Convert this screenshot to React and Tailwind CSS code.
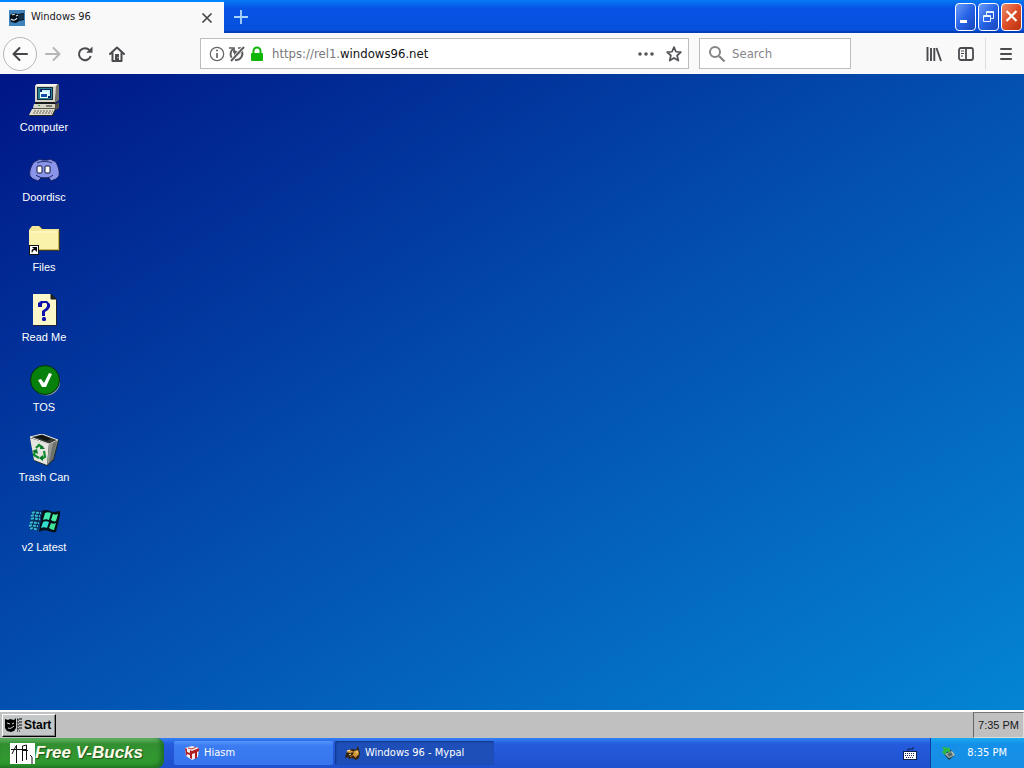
import React from "react";

function TabIcon() {
  return (
    <svg className="size-4 shrink-0" viewBox="0 0 16 16" aria-hidden="true">
      <rect width="16" height="16" fill="#3f83bd" />
      <path d="M1 5l4-2 4 1 6-1 0 7-5 1-3 2-5-1-1-3z" fill="#071018" />
      <path d="M9 5l6-1v5l-5 1z" fill="#17344e" />
      <path d="M3 5l3-1M7 6l2-1M2 9c2 2 5 1 6-1" fill="none" stroke="#d4e6f2" strokeWidth="1.1" />
    </svg>
  );
}

function ComputerIcon() {
  return (
    <svg className="size-8" viewBox="0 0 32 32" aria-hidden="true">
      <path d="M9 0h22l-1 17-3 3H7z" fill="#17191c" />
      <path d="M9 0h20l-2 18H7V2z" fill="#d6d5cc" />
      <path d="M9 0h21l-2 2H7z" fill="#f5f4ea" />
      <path d="M28 2l3-2v16l-4 3z" fill="#77756e" />
      <path d="M9 3h16v13H9z" fill="#182b38" />
      <path d="M10 4h14v11H10z" fill="#2a8290" />
      <path d="M12 5h11v9H12z" fill="#071c67" />
      <path d="M14 6h8v6h-2V8h-6z" fill="#c9f2f8" />
      <path d="M12 8h8v6h-8z" fill="#eaffff" />
      <path d="M13 10h6v3h-6z" fill="#174aa6" />
      <path d="M6 20h22l3-2v6l-3 2H5z" fill="#55534c" />
      <path d="M6 20h21v4H5z" fill="#d6d3c7" />
      <path d="M18 22h6" stroke="#25231f" />
      <path d="M10 21.5h2" stroke="#2f9b4c" />
      <path d="M4 25h24l-3 7H1z" fill="#292721" />
      <path d="M4 25h23l-3 6H1z" fill="#e0ddce" />
      <path d="M6 27h19M5 29h19" stroke="#66625a" strokeDasharray="2 1" />
    </svg>
  );
}

function DiscordIcon() {
  return (
    <svg className="size-8" viewBox="0 0 32 32" aria-hidden="true">
      <path d="M6 8l6-3 2 1h6l2-1 6 3c2 4 4 9 3 14l-3 3-5 2-2-3h-8l-3 3-5-2-3-3C1 17 3 12 6 8z" fill="#8a94e8" stroke="#15205f" />
      <path d="M9 9c4-2 11-2 15 0M8 21c5 4 13 4 17 0" fill="none" stroke="#1d2967" />
      <rect x="9" y="12" width="5" height="7" rx="1" fill="#fff" stroke="#0c1238" />
      <rect x="17" y="12" width="5" height="7" rx="1" fill="#fff" stroke="#0c1238" />
    </svg>
  );
}

function FolderIcon() {
  return (
    <svg className="size-8" viewBox="0 0 32 32" aria-hidden="true">
      <path d="M2 6l3-4h7l3 3h16l1 2v20H3z" fill="#3c3c2c" />
      <path d="M1 6l3-4h7l3 3h17v21H1z" fill="#f4e798" />
      <path d="M1 7h29v17l-3 2H1z" fill="#faf1ab" />
      <path d="M1.500 8h28" stroke="#fffcd2" />
      <path d="M30.500 6v19.500H11" fill="none" stroke="#c9b75e" />
      <rect x="1.500" y="21.500" width="9" height="9" fill="#fff" stroke="#111" />
      <path d="M4 29c-1-3 0-4 2-4l-2-2h5v5l-2-2c-2 0-2 1-3 3z" fill="#000" />
    </svg>
  );
}

function ReadMeIcon() {
  return (
    <svg className="size-8" viewBox="0 0 32 32" aria-hidden="true">
      <path d="M5 1h19l5 5v26H5z" fill="#202030" />
      <path d="M5 0h18l5 5v26H5z" fill="#fbf7c8" />
      <path d="M23 0v5h5z" fill="#26261e" stroke="#181818" />
      <path d="M10 13V9l3-2h6l3 3v3l-2 3-3 2v4h-3v-5l4-3 1-2v-2l-1-1h-3l-1 1v3z" fill="#1111ad" />
      <rect x="14" y="23" width="4" height="4" rx="1.500" fill="#1111ad" />
    </svg>
  );
}

function TosIcon() {
  return (
    <svg className="size-8" viewBox="0 0 32 32" aria-hidden="true">
      <circle cx="18.500" cy="18" r="13.500" fill="#8398a0" />
      <circle cx="17" cy="16" r="14.500" fill="#08800c" stroke="#032d08" />
      <path d="M10 16l3-1 3 4 5-10 3 1-6 13h-4z" fill="#fff" />
    </svg>
  );
}

function TrashIcon() {
  return (
    <svg className="size-8" viewBox="0 0 32 32" aria-hidden="true">
      <path d="M2 3l12-3 17 6-5 20-7 6-13-5z" fill="#222b2a" />
      <path d="M2 3l12-3 16 6-9 4z" fill="#343733" stroke="#eee" />
      <path d="M2 4l19 6-2 21-13-5z" fill="#e5e4df" />
      <path d="M21 10l9-4-5 19-6 6z" fill="#979993" />
      <path d="M25 9l4-2-4 18-4 3z" fill="#6d726d" />
      <path d="M7 3l7-2 9 4-4 2z" fill="#10130f" />
      <path d="M8 14l3-3 4 3M16 17l1 6-4 2M11 24l-5-3 1-4" fill="none" stroke="#118c2e" strokeWidth="2.2" />
      <path d="M13 11l4 4-5 0zM15 21l-4 3 4 3zM4 17l5-2 1 5z" fill="#087528" />
    </svg>
  );
}

function FlagIcon() {
  return (
    <svg className="size-8" viewBox="0 0 32 32" aria-hidden="true">
      <path d="M14 7c5-3 8 1 12 1 3 0 4-1 7-1l-5 21c-6 2-9-5-17 0z" fill="#071018" />
      <path d="M17 9c2-1 4-1 6 0l-2 7c-2-1-4-1-6 0z" fill="#43e8b1" />
      <path d="M25 10c2 1 3 1 5 0l-2 7c-2 1-3 0-5-1z" fill="#4df0a0" />
      <path d="M15 18c2-1 4-1 6 0l-2 6c-2-1-4-1-6 0z" fill="#35ddd0" />
      <path d="M23 19c2 1 3 1 5 0l-2 7c-2 0-3-1-5-2z" fill="#42e497" />
      <path d="M4 7c4-2 6 1 10 0l-4 20c-3-2-5 0-9-2z" fill="#082c5a" />
      <path d="M4 9c4-2 6 1 9 0M3 12c4-2 6 1 9 0M3 15c4-2 6 1 9 0M2 19c4-2 6 1 9 0M1 22c4-2 6 1 9 0M2 25c3-2 5 1 8 0" fill="none" stroke="#37b9d5" strokeWidth="2" strokeDasharray="3 1" />
    </svg>
  );
}

function StartIcon() {
  return (
    <svg className="h-4 w-[17px] shrink-0" viewBox="0 0 17 16" aria-hidden="true">
      <path d="M0 2l3 1 2-1 4 1 2-2v10l-2 3-3 1-4-1-2-3z" fill="#000" />
      <path d="M2 6l3 1M7 7l2-1M3 11c2 1 4 0 6-2" stroke="#d5dce0" fill="none" />
      <path d="M12 2h4M12 5h4M12 8h4M12 11h4M12 14h3" stroke="#000" strokeWidth="1.200" strokeDasharray="1 1" />
      <path d="M13 2v12M16 1v12" stroke="#000" strokeDasharray="2 1" />
    </svg>
  );
}

const shortcuts = [
  ["Computer", ComputerIcon],
  ["Doordisc", DiscordIcon],
  ["Files", FolderIcon],
  ["Read Me", ReadMeIcon],
  ["TOS", TosIcon],
  ["Trash Can", TrashIcon],
  ["v2 Latest", FlagIcon],
];

function TitleBar() {
  return (
    <header className="flex h-[33px] shrink-0 items-stretch bg-linear-to-b from-[#0b7af5] via-[#0753e5] via-25% to-[#0650db] shadow-[inset_0_-2px_1px_#063cb6]">
      <div className="flex w-56 items-center border-t-2 border-[#0084ff] bg-[#f9f9fa] pr-[7px] pl-[9px]">
        <TabIcon />
        <span className="ml-1.5 grow text-[11px] text-[#17171b]">Windows 96</span>
        <button aria-label="Close tab" className="flex size-5 items-center justify-center">
          <svg className="size-3" viewBox="0 0 12 12" fill="none" stroke="#45454a" strokeWidth="1.7"><path d="M1.5 1.5l9 9m0-9l-9 9" /></svg>
        </button>
      </div>
      <button aria-label="New tab" className="flex w-[34px] items-center justify-center">
        <svg className="size-4" viewBox="0 0 16 16" stroke="#a9d4ff" strokeWidth="1.8"><path d="M8 1v14M1 8h14" /></svg>
      </button>
      <div className="ml-auto flex items-center gap-0.5 pr-0.5">
        <button aria-label="Minimize" className="h-7 w-[21px] rounded border border-white bg-linear-to-br from-[#6c9cfa] via-[#2662e5] to-[#1746bd]">
          <svg className="w-full" viewBox="0 0 19 26"><path d="M4 16h7v3H4z" fill="#fff" /></svg>
        </button>
        <button aria-label="Restore" className="h-7 w-[21px] rounded border border-white bg-linear-to-br from-[#6c9cfa] via-[#2662e5] to-[#1746bd]">
          <svg className="w-full" viewBox="0 0 19 26" fill="none" stroke="#e9f3ff"><path d="M7.500 11V7.500h7v7H12M4.500 11.500h7v6h-7zM4 12.500h8M7 8.500h8" /></svg>
        </button>
        <button aria-label="Close window" className="h-7 w-[21px] rounded border border-white bg-linear-to-br from-[#ed8a68] via-[#dd4d27] to-[#b9320d]">
          <svg className="w-full" viewBox="0 0 19 26" fill="none" stroke="#fff" strokeWidth="2.2"><path d="M4.5 7l10 10m0-10l-10 10" /></svg>
        </button>
      </div>
    </header>
  );
}

function NavigationBar() {
  return (
    <nav className="flex h-[41px] shrink-0 items-center bg-[#f9f9fa] pr-2.5 pl-[3px]">
      <button aria-label="Back" className="flex size-[34px] shrink-0 items-center justify-center rounded-full border border-[#b7b7bb] bg-[#fcfcfc]">
        <svg className="size-4" viewBox="0 0 16 16" fill="none" stroke="#46464a" strokeWidth="2" strokeLinecap="round" strokeLinejoin="round"><path d="M7.5 2L1.5 8l6 6M2 8h13" /></svg>
      </button>
      <button aria-label="Forward" className="flex w-8 justify-center">
        <svg className="size-4" viewBox="0 0 16 16" fill="none" stroke="#b5b5b8" strokeWidth="2" strokeLinecap="round" strokeLinejoin="round"><path d="M8.5 2l6 6-6 6M1 8h13" /></svg>
      </button>
      <button aria-label="Reload" className="flex w-8 justify-center">
        <svg className="size-4" viewBox="0 0 16 16" fill="none" stroke="#4a4a4f" strokeWidth="2"><path d="M12.5 4.2A6 6 0 1 0 13.7 10" /><path d="M15.5.5v6.2H9.2z" fill="#4a4a4f" stroke="none" /></svg>
      </button>
      <button aria-label="Home" className="flex w-8 justify-center">
        <svg className="size-4" viewBox="0 0 16 16" fill="none" stroke="#4a4a4f" strokeWidth="2" strokeLinejoin="round" strokeLinecap="round"><path d="M1 8l7-6.5L15 8M3.5 7v8h9V7" /><path d="M6 8h4v7H6z" fill="#4a4a4f" stroke="none" /><circle cx="9" cy="11.500" r=".6" fill="#fff" stroke="none" /></svg>
      </button>
      <div className="ml-[67px] flex h-[31px] min-w-0 grow items-center border border-[#bdbdc1] bg-white pr-1.5 pl-2">
        <svg className="size-4 shrink-0" viewBox="0 0 16 16" fill="none" stroke="#656569"><circle cx="8" cy="8" r="6.7" strokeWidth="1.2" /><path d="M8 7v5" strokeWidth="1.7" /><circle cx="8" cy="4.5" r="1" fill="#656569" stroke="none" /></svg>
        <svg className="ml-1 size-4 shrink-0" viewBox="0 0 16 16" fill="none" stroke="#5d5d61" strokeWidth="2"><path d="M4 3A6.3 6.3 0 0 0 3 12M12.500 4.500A6.4 6.4 0 0 1 6 14" /><path d="M0 2h5v5M9 2h3" strokeWidth="1.7" /><path d="M5 4l7 3-7 5z" fill="#5d5d61" stroke="none" /><path d="M2 15L15 1" stroke="#fff" strokeWidth="3.500" /><path d="M2 15L15 1" /></svg>
        <svg className="ml-1 size-4 shrink-0" viewBox="0 0 16 16"><path d="M4.5 8V5a3.5 3.5 0 0 1 7 0v3" fill="none" stroke="#10b50a" strokeWidth="2" /><rect x="2" y="7" width="12" height="8" rx="1" fill="#10b50a" /></svg>
        <div className="relative ml-[7px] flex min-w-0 grow items-center">
          <input aria-label="Address" defaultValue="https://rel1.windows96.net" className="w-full bg-transparent text-[13px] text-transparent outline-none" />
          <span aria-hidden="true" className="pointer-events-none absolute left-0 text-[13px] whitespace-nowrap text-[#77777b]">https://rel1.<span className="text-[#101014]">windows96.net</span></span>
        </div>
        <button aria-label="Page actions" className="mr-3">
          <svg className="size-4" viewBox="0 0 16 16" fill="#55555a"><circle cx="2" cy="8" r="1.800" /><circle cx="8" cy="8" r="1.800" /><circle cx="14" cy="8" r="1.800" /></svg>
        </button>
        <button aria-label="Bookmark page">
          <svg className="size-4" viewBox="0 0 17 17" fill="none" stroke="#505055" strokeWidth="1.8" strokeLinejoin="round"><path d="M8.5 1.2l2.1 4.9 5.2.5-4 3.5 1.3 5.4-4.6-2.8-4.6 2.8 1.3-5.4-4-3.5 5.2-.5z" /></svg>
        </button>
      </div>
      <label className="ml-2.5 flex h-[31px] w-[152px] shrink-0 items-center border border-[#bdbdc1] bg-white px-2">
        <svg className="mr-1.5 size-[18px] shrink-0" viewBox="0 0 18 18" fill="none" stroke="#858589" strokeWidth="2"><circle cx="7" cy="7" r="5" /><path d="M11 11l5.500 5.500" strokeWidth="2.3" /></svg>
        <input aria-label="Search" placeholder="Search" className="w-full min-w-0 bg-transparent text-[13px] outline-none placeholder:text-[#85858a]" />
      </label>
      <div className="ml-[67px] flex items-center">
        <button aria-label="Library" className="flex w-8 justify-center">
          <svg className="size-4" viewBox="0 0 16 16" stroke="#4a4a4f" strokeWidth="1.9" fill="none"><path d="M1.5 1v14M5 2v13M8.3 2v13M10.5 2l4.5 13" /></svg>
        </button>
        <button aria-label="Sidebars" className="flex w-8 justify-center">
          <svg className="size-4" viewBox="0 0 16 16" stroke="#4a4a4f" strokeWidth="1.8" fill="none"><rect x="1" y="2" width="14" height="12" rx="2" /><path d="M8 2v12" /><path d="M3 5h3M3 7.5h3M3 10h2" strokeWidth="1" /></svg>
        </button>
        <span className="ml-[3px] h-8 w-px bg-[#dddddf]" />
        <button aria-label="Menu" className="ml-3 flex w-4 justify-center">
          <svg className="size-4" viewBox="0 0 16 16" stroke="#4a4a4f" strokeWidth="2" strokeLinecap="round"><path d="M3 3h10M3 8h10M3 13h10" /></svg>
        </button>
      </div>
    </nav>
  );
}

function Desktop() {
  return (
    <main className="flex grow items-start bg-linear-to-br/srgb from-[#001686] via-[#0350b0] to-[#0485d4] pt-2.5 pl-1">
      <div className="grid w-20 auto-rows-[70px]">
        {shortcuts.map(([name, Icon]) => (
          <button key={name} className="flex flex-col items-center font-['Liberation_Sans',sans-serif] text-[11px] leading-[14px] text-white">
            <Icon />
            <span className="mt-1">{name}</span>
          </button>
        ))}
      </div>
    </main>
  );
}

function ClassicTaskbar() {
  return (
    <footer className="flex h-7 shrink-0 items-center justify-between border-t-2 border-white bg-[#c0c0c0] font-['Liberation_Sans',sans-serif]">
      <button className="ml-0.5 flex h-[23px] items-center gap-0.5 border border-t-white border-r-black border-b-black border-l-white bg-[#c3c7c8] pr-1 pl-0.5 text-xs font-bold text-black shadow-[inset_-1px_-1px_#808080]">
        <StartIcon />
        Start
      </button>
      <time className="flex h-full items-center border border-t-[#777] border-r-[#ddd] border-b-[#ddd] border-l-[#666] pr-1 pl-1 text-[11px] text-[#181820]">7:35 PM</time>
    </footer>
  );
}

function XpTaskbar() {
  return (
    <footer className="flex h-[30px] shrink-0 items-stretch bg-linear-to-b from-[#347ff5] via-[#245bdc] via-20% to-[#1f50cd] text-[11px] text-white">
      <button className="flex w-[164px] items-center rounded-r-lg bg-linear-to-b from-[#65b767] via-[#328f31] via-20% to-[#309d2f] pl-2.5 font-['Liberation_Sans',sans-serif] text-[17px] font-bold italic shadow-[inset_-3px_-2px_4px_#1e6d23]">
        <svg className="h-[21px] w-[25px] shrink-0" viewBox="0 0 25 21" aria-hidden="true"><rect width="25" height="21" fill="#fff" /><path d="M6.500 20V2M1 6.500h15M16.500 17V2l-4 1v15M12 7.500h6M20 12l2 2v7M2 11l4-8" fill="none" stroke="#101010" /></svg>
        <span className="whitespace-nowrap text-[#fbfbe8] text-shadow-[1px_1px_1px_#205020]">Free V-Bucks</span>
      </button>
      <button className="my-[3px] ml-2.5 flex w-[159px] items-center gap-1 rounded-xs bg-linear-to-b from-[#5594fa] via-[#3b7cf2] via-20% to-[#3775ed] pl-2.5">
        <svg className="size-4" viewBox="0 0 16 16" aria-hidden="true"><path d="M1 3l7-2 7 2-1 9-6 3-6-4z" fill="#f2efed" /><path d="M1 3l2 1v3l3 1V5l2 1v8l-2-1v-3l-3-1v2l-1-1zM8 6l7-3v3l-2 1v6l-2 1V8l-3 1z" fill="#b31c22" /><path d="M4 3l4 1 4-2" fill="none" stroke="#c73537" /></svg>
        Hiasm
      </button>
      <button className="my-[3px] ml-0.5 flex w-[159px] items-center gap-1 rounded-xs bg-[#1e4fb9] pl-2.5 shadow-[inset_1px_1px_2px_#123684]">
        <svg className="size-4" viewBox="0 0 16 16" aria-hidden="true"><path d="M1 9l2-4 5-1 3 1 2-4 1 4 1 3-1 5-3 2-4-2-3 1-1-2-3 1z" fill="#34230f" /><path d="M1 7l4-2 4 2-4 1zM9 6l4-1 1 4-3 3-3-2z" fill="#d59c3c" /><path d="M2 6l3-1M11 7h2M4 10l2-1" stroke="#fff0b8" /><path d="M5 12l3-2 3 3" fill="none" stroke="#b86b21" /></svg>
        Windows 96 - Mypal
      </button>
      <div className="ml-auto flex items-center pr-[13px]">
        <svg className="h-3.5 w-3.5" viewBox="0 0 14 14" aria-hidden="true"><path d="M5 5V3h5V1" fill="none" stroke="#10204c" /><rect x=".5" y="5.500" width="13" height="8" fill="#fff" stroke="#10204c" /><path d="M2 7.5h10M2 9.5h10M3 11.5h8" stroke="#182758" strokeDasharray="1 1" /></svg>
      </div>
      <div className="flex items-center border-l border-[#123e9d] bg-linear-to-b from-[#1caaf0] via-[#1590e8] via-20% to-[#168ee6] pr-[17px] pl-2.5">
        <svg className="mr-2.5 size-4" viewBox="0 0 16 16" aria-hidden="true"><path d="M3 9l7-4 4 5-6 5z" fill="#273e45" /><path d="M4 9l7-3 3 4-6 3z" fill="#b8c8c0" /><path d="M6 9l4-2 2 3-4 2z" fill="#56676a" /><path d="M1 2l8 1v5L6 6l-2 4-3-3 2-2z" fill="#2fb93c" /></svg>
        <time>8:35 PM</time>
      </div>
    </footer>
  );
}

export default function App() {
  return (
    <div className="flex min-h-screen flex-col font-['DejaVu_Sans_Condensed','Noto_Sans',sans-serif]">
      <TitleBar />
      <NavigationBar />
      <Desktop />
      <ClassicTaskbar />
      <XpTaskbar />
    </div>
  );
}
